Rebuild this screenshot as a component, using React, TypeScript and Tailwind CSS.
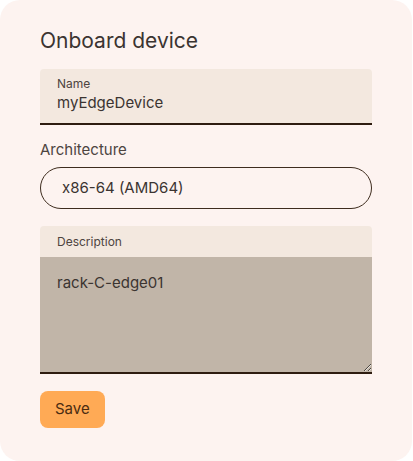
import React, { useState } from 'react';

const App: React.FC = () => {
  const [name, setName] = useState('myEdgeDevice');
  const [arch, setArch] = useState('x86-64 (AMD64)');
  const [description, setDescription] = useState('rack-C-edge01');

  return (
    <div className="min-h-screen w-full bg-white font-['Inter',sans-serif]">
      <div className="w-[412px] h-[461px] rounded-[20px] bg-[#fdf3f0] px-10 pt-[26px]">
        <h1 className="text-[21px] leading-[29px] text-[#3b3431]">Onboard device</h1>

        <div className="mt-[14px] flex flex-col">
          {/* Name field */}
          <label className="flex h-[56px] flex-col rounded-t-[4px] border-b-2 border-[#2e1c10] bg-[#f3e8df] px-[17px] pt-[7px]">
            <span className="text-[12px] leading-[16px] text-[#4d4440]">Name</span>
            <input
              value={name}
              onChange={(e) => setName(e.target.value)}
              className="bg-transparent text-[15px] leading-[22px] text-[#3b3431] outline-none"
            />
          </label>

          {/* Architecture */}
          <span className="mt-[15px] text-[15px] leading-[20px] text-[#4d4440]">Architecture</span>
          <div className="mt-[7px] flex h-[42px] items-center rounded-full border border-[#3e2c1e] px-[21px]">
            <input
              value={arch}
              onChange={(e) => setArch(e.target.value)}
              className="w-full bg-transparent text-[15px] text-[#3b3431] outline-none"
            />
          </div>

          {/* Description */}
          <div className="mt-[17px] flex flex-col overflow-hidden rounded-t-[4px]">
            <div className="h-[31px] bg-[#f3e8df] px-[17px] pt-[8px] text-[12px] leading-[16px] text-[#4d4440]">
              Description
            </div>
            <textarea
              value={description}
              onChange={(e) => setDescription(e.target.value)}
              className="block h-[117px] w-full resize-y border-b-2 border-[#2e1c10] bg-[#c1b5a8] px-[17px] pt-[15px] text-[15px] leading-[22px] text-[#3b3431] outline-none"
            />
          </div>

          <div className="mt-[17px]">
            <button className="h-[37px] rounded-[8px] bg-[#ffaa55] px-[15px] text-[15px] text-[#4a2c12]">
              Save
            </button>
          </div>
        </div>
      </div>
    </div>
  );
};

export default App;
